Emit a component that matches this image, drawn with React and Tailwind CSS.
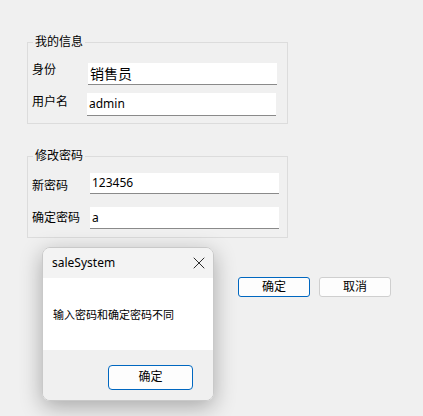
import { X } from 'lucide-react';

const FONT = "font-['Noto_Sans','Noto_Sans_CJK_SC',sans-serif]";

function Field({ value, className = '', textClass = 'text-[12px]' }) {
  return (
    <div
      className={`flex items-center bg-white border-b border-[#8a8a8a] pl-[2px] ${className}`}
    >
      <span className={`leading-none text-black ${textClass}`}>{value}</span>
    </div>
  );
}

export default function App() {
  return (
    <div className={`relative w-[423px] h-[416px] bg-[#f0f0f0] text-black ${FONT}`}>
      <div className="pl-[27px] pt-[35px] w-[288px]">
        {/* 我的信息 */}
        <fieldset className="border border-[#dcdcdc] h-[89px]">
          <legend className="ml-[5px] px-[2px] text-[12px] leading-[14px]">我的信息</legend>
          <div className="pt-[14px] pl-[4px]">
            <div className="flex items-start h-[22px]">
              <span className="w-[56px] text-[12px] leading-[14px]">身份</span>
              <Field value="销售员" className="w-[189px] h-[22px]" textClass="text-[14px]" />
            </div>
            <div className="flex items-start h-[23px] mt-[8px]">
              <span className="w-[55px] text-[12px] leading-[14px] mt-[2px]">用户名</span>
              <Field value="admin" className="w-[189px] h-[23px]" />
            </div>
          </div>
        </fieldset>

        {/* 修改密码 */}
        <fieldset className="border border-[#dcdcdc] h-[89px] mt-[25px]">
          <legend className="ml-[5px] px-[2px] text-[12px] leading-[14px]">修改密码</legend>
          <div className="pt-[10px] pl-[4px]">
            <div className="flex items-start h-[21px]">
              <span className="w-[58px] text-[12px] leading-[14px] mt-[6px]">新密码</span>
              <Field value="123456" className="w-[189px] h-[21px] !items-start pt-[4px]" />
            </div>
            <div className="flex items-start h-[22px] mt-[13px]">
              <span className="w-[58px] text-[12px] leading-[14px] mt-[4px]">确定密码</span>
              <Field value="a" className="w-[189px] h-[22px]" />
            </div>
          </div>
        </fieldset>
      </div>

      <div className="flex gap-[9px] pl-[238px] mt-[39px]">
        <button className="w-[72px] h-[20px] rounded-[3px] border border-[#0067c0] bg-[#fdfdfd] text-[12px] leading-none">
          确定
        </button>
        <button className="w-[72px] h-[20px] rounded-[3px] border border-[#cfcfcf] bg-[#fdfdfd] text-[12px] leading-none">
          取消
        </button>
      </div>

      {/* 提示对话框 */}
      <div className="absolute left-[42px] top-[247px] w-[172px] h-[154px] rounded-[8px] border border-[#c9c9c9] overflow-hidden shadow-[0_6px_22px_rgba(0,0,0,0.3)] flex flex-col">
        <div className="h-[30px] bg-[#f3f3f3] flex items-center justify-between pl-[9px] pr-[4px]">
          <span className="text-[12px] leading-none">saleSystem</span>
          <X className="w-[20px] h-[20px] text-[#1a1a1a]" strokeWidth={1.1} />
        </div>
        <div className="h-[72px] bg-white flex items-center pl-[10px]">
          <span className="text-[11px] leading-none">输入密码和确定密码不同</span>
        </div>
        <div className="flex-1 bg-[#f0f0f0] pl-[65px] pt-[13px]">
          <button className="w-[85px] h-[25px] rounded-[4px] border border-[#0067c0] bg-[#fdfdfd] text-[12px] leading-none">
            确定
          </button>
        </div>
      </div>
    </div>
  );
}
